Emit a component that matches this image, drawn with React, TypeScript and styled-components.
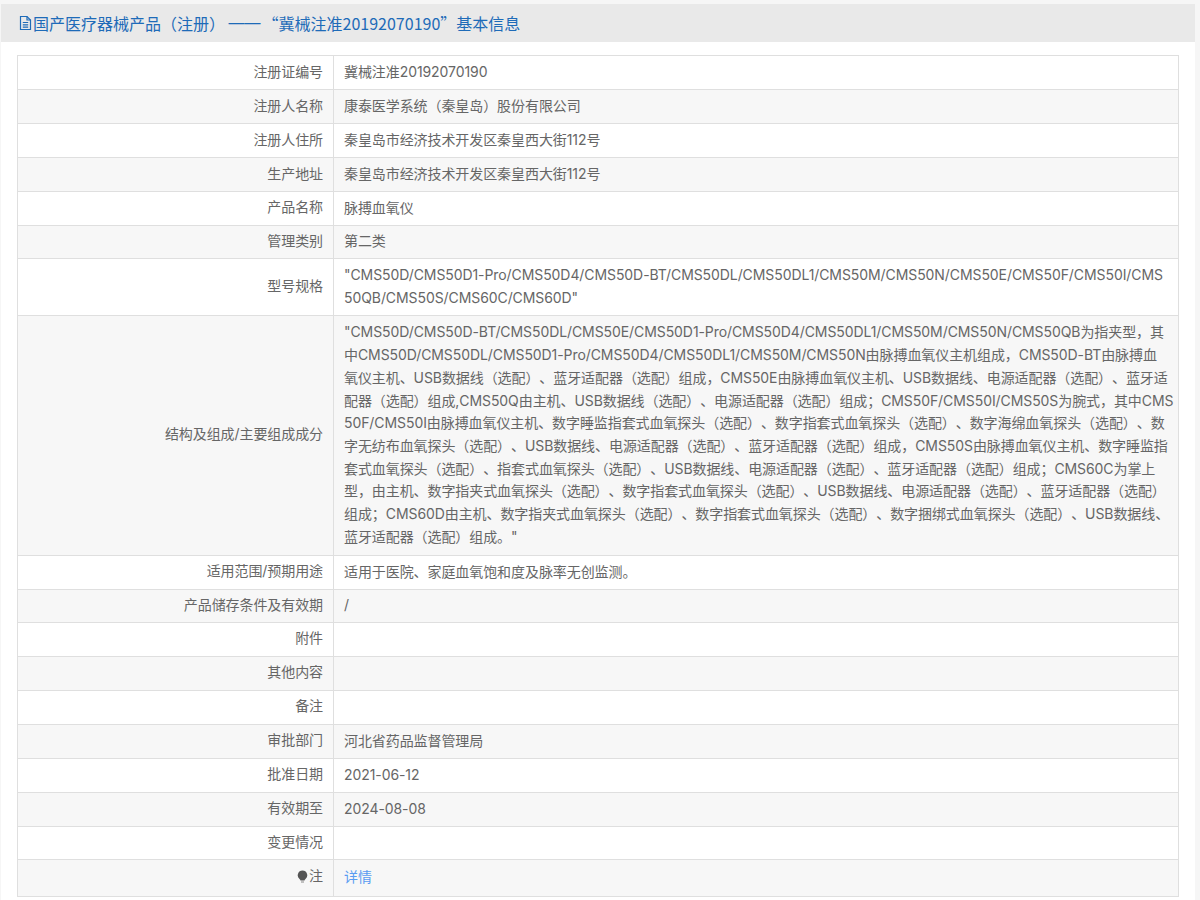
import React from "react";
import styled, { createGlobalStyle } from "styled-components";

const GlobalStyle = createGlobalStyle`
  html, body {
    margin: 0;
    padding: 0;
    background: #f6f6f6;
  }
  body {
    font-family: Inter, "Noto Sans CJK SC", sans-serif;
    text-spacing-trim: space-all;
  }
`;

const Page = styled.div`
  width: 1200px;
  height: 900px;
  overflow: hidden;
  box-sizing: border-box;
  padding: 4px 5px 0 1px;
`;

const Panel = styled.div`
  height: 896px;
  background: #ffffff;
`;

const Header = styled.div`
  display: flex;
  align-items: center;
  height: 38px;
  padding-left: 17px;
  background: #e9e9e9;
  color: #1e6bb8;
  font-family: "Noto Sans CJK SC", sans-serif;
  font-size: 16px;
  white-space: pre;
`;

const DocIcon = styled.svg`
  width: 15px;
  height: 16px;
  flex-shrink: 0;
`;

const Dash = styled.span`
  margin-right: 2px;
  font-family: "Liberation Sans", sans-serif;
`;

const InfoTable = styled.table`
  width: 1162px;
  margin: 13px 0 0 16px;
  border-collapse: collapse;
  table-layout: fixed;
  border: 1px solid #d4d4d6;
  font-size: 14px;
  letter-spacing: -0.08px;
  color: #666666;
`;

const Row = styled.tr<{ $striped: boolean; $height: number }>`
  height: ${(p) => p.$height}px;
  background: ${(p) => (p.$striped ? "#f7f7f7" : "#ffffff")};
`;

const LabelCell = styled.td`
  width: 316px;
  box-sizing: border-box;
  padding: 0 10px 1px;
  text-align: right;
  border: 1px solid #dfdfdf;
  line-height: 22.7px;
  color: #666666;
`;

const ValueCell = styled.td`
  box-sizing: border-box;
  padding: 0 4px 0 10px;
  border: 1px solid #dfdfdf;
  line-height: 22.7px;
  white-space: pre-line;
  word-break: break-all;
`;

const NoteLabel = styled.span`
  display: inline-flex;
  align-items: center;
  gap: 1px;
`;

const DetailLink = styled.a`
  color: #5a9cf2;
  text-decoration: none;
`;

const rows: [string, string, number][] = [
  ["注册证编号", "冀械注准20192070190", 34],
  ["注册人名称", "康泰医学系统（秦皇岛）股份有限公司", 34],
  ["注册人住所", "秦皇岛市经济技术开发区秦皇西大街112号", 34],
  ["生产地址", "秦皇岛市经济技术开发区秦皇西大街112号", 34],
  ["产品名称", "脉搏血氧仪", 33.5],
  ["管理类别", "第二类", 33.5],
  [
    "型号规格",
    "\"CMS50D/CMS50D1-Pro/CMS50D4/CMS50D-BT/CMS50DL/CMS50DL1/CMS50M/CMS50N/CMS50E/CMS50F/CMS50I/CMS\n50QB/CMS50S/CMS60C/CMS60D\"",
    56.5,
  ],
  [
    "结构及组成/主要组成成分",
    `"CMS50D/CMS50D-BT/CMS50DL/CMS50E/CMS50D1-Pro/CMS50D4/CMS50DL1/CMS50M/CMS50N/CMS50QB为指夹型，其
中CMS50D/CMS50DL/CMS50D1-Pro/CMS50D4/CMS50DL1/CMS50M/CMS50N由脉搏血氧仪主机组成，CMS50D-BT由脉搏血
氧仪主机、USB数据线（选配）、蓝牙适配器（选配）组成，CMS50E由脉搏血氧仪主机、USB数据线、电源适配器（选配）、蓝牙适
配器（选配）组成,CMS50Q由主机、USB数据线（选配）、电源适配器（选配）组成；CMS50F/CMS50I/CMS50S为腕式，其中CMS
50F/CMS50I由脉搏血氧仪主机、数字睡监指套式血氧探头（选配）、数字指套式血氧探头（选配）、数字海绵血氧探头（选配）、数
字无纺布血氧探头（选配）、USB数据线、电源适配器（选配）、蓝牙适配器（选配）组成，CMS50S由脉搏血氧仪主机、数字睡监指
套式血氧探头（选配）、指套式血氧探头（选配）、USB数据线、电源适配器（选配）、蓝牙适配器（选配）组成；CMS60C为掌上
型，由主机、数字指夹式血氧探头（选配）、数字指套式血氧探头（选配）、USB数据线、电源适配器（选配）、蓝牙适配器（选配）
组成；CMS60D由主机、数字指夹式血氧探头（选配）、数字指套式血氧探头（选配）、数字捆绑式血氧探头（选配）、USB数据线、
蓝牙适配器（选配）组成。"`,
    240,
  ],
  ["适用范围/预期用途", "适用于医院、家庭血氧饱和度及脉率无创监测。", 34],
  ["产品储存条件及有效期", "/", 33.5],
  ["附件", "", 33.5],
  ["其他内容", "", 34],
  ["备注", "", 34],
  ["审批部门", "河北省药品监督管理局", 34],
  ["批准日期", "2021-06-12", 34],
  ["有效期至", "2024-08-08", 34],
  ["变更情况", "", 33.5],
];

export default function App() {
  return (
    <Page>
      <GlobalStyle />
      <Panel>
        <Header>
          <DocIcon viewBox="0 0 15 16" fill="none" stroke="#1e6bb8" strokeWidth="1.2">
            <path d="M2.500 1.500h6.500l3.500 3.500v9.500h-10z" />
            <path d="M9 1.500v3.500h3.500M4.800 7.500h5.400M4.800 9.800h5.400M4.800 12.100h5.400" />
          </DocIcon>
          国产医疗器械产品（注册） <Dash>——</Dash>“冀械注准20192070190”基本信息
        </Header>
        <InfoTable>
          <tbody>
            {rows.map(([label, value, height], i) => (
              <Row key={label} $striped={i % 2 === 1} $height={height}>
                <LabelCell>{label}</LabelCell>
                <ValueCell>{value}</ValueCell>
              </Row>
            ))}
            <Row $striped $height={36.5}>
              <LabelCell>
                <NoteLabel>
                  <svg width="11" height="13" viewBox="0 0 11 13">
                    <path
                      d="M5.500 0.500a4.800 4.800 0 0 1 3 8.500c-.6.500-.9 1-1 1.600h-4c-.1-.6-.4-1.100-1-1.600a4.800 4.800 0 0 1 3-8.500z"
                      fill="#555555"
                    />
                    <path d="M4 11.500h3v1H4z" fill="#888888" />
                  </svg>
                  注
                </NoteLabel>
              </LabelCell>
              <ValueCell>
                <DetailLink href="#">详情</DetailLink>
              </ValueCell>
            </Row>
          </tbody>
        </InfoTable>
      </Panel>
    </Page>
  );
}
